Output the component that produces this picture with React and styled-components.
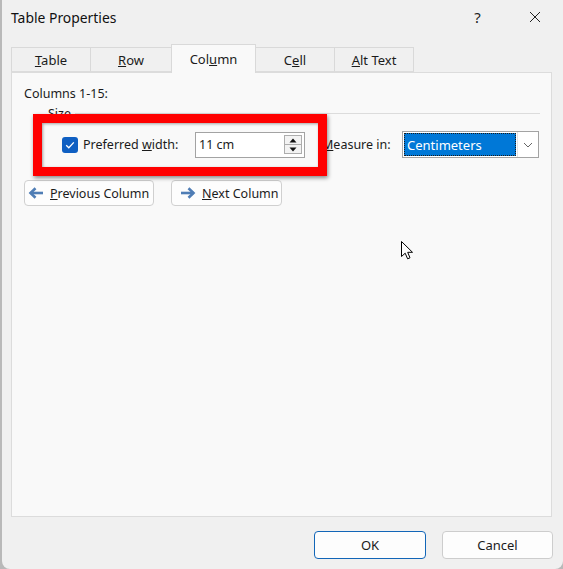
import React from 'react';
import styled, { createGlobalStyle } from 'styled-components';

const GlobalStyle = createGlobalStyle`
  html, body {
    margin: 0;
    padding: 0;
    background: #b9b9b9;
  }
  body {
    font-family: "Segoe UI", "Noto Sans", sans-serif;
    font-size: 12.5px;
    color: #1b1b1b;
  }
`;

const Window = styled.div`
  position: relative;
  margin-left: 2px;
  width: 561px;
  height: 569px;
  background: #f0f0f0;
  border-radius: 0 0 8px 8px;
  display: flex;
  flex-direction: column;
  box-sizing: border-box;
  overflow: hidden;
`;

const TitleBar = styled.div`
  height: 34px;
  display: flex;
  align-items: center;
  padding-left: 9px;
`;

const Title = styled.div`
  flex: 1;
  font-size: 13.9px;
  color: #111;
`;

const TitleButton = styled.div`
  width: 57px;
  height: 34px;
  display: flex;
  align-items: center;
  justify-content: center;
  font-size: 15px;
  color: #222;
`;

const TabRow = styled.div`
  display: flex;
  align-items: flex-end;
  height: 28px;
  margin-top: 10px;
  padding-left: 10px;
  position: relative;
  z-index: 1;
`;

const Tab = styled.div`
  flex-shrink: 0;
  width: ${p => p.$w}px;
  height: ${p => (p.$active ? 29 : 25)}px;
  margin-bottom: ${p => (p.$active ? -1 : 0)}px;
  margin-left: -1px;
  box-sizing: border-box;
  border: 1px solid #d9d9d9;
  border-bottom: ${p => (p.$active ? 'none' : '1px solid #dcdcdc')};
  background: ${p => (p.$active ? '#f9f9f9' : '#f0f0f0')};
  display: flex;
  align-items: ${p => (p.$active ? 'flex-start' : 'center')};
  padding-top: ${p => (p.$active ? 5 : 0)}px;
  justify-content: center;
  font-size: 13px;
  z-index: ${p => (p.$active ? 2 : 1)};
`;

const Panel = styled.div`
  margin: 0 11px 0 9px;
  height: 445px;
  box-sizing: border-box;
  border: 1px solid #dcdcdc;
  background: #f9f9f9;
  padding: 13px 11px 0 12px;
  display: flex;
  flex-direction: column;
`;

const Heading = styled.div`
  line-height: 16px;
`;

const GroupHeader = styled.div`
  display: flex;
  align-items: center;
  margin: 3px 0 0 24px;
  height: 16px;
`;

const GroupLine = styled.div`
  flex: 1;
  height: 0;
  border-top: 1px solid #dcdcdc;
  margin-left: 4px;
`;

const FieldRow = styled.div`
  display: flex;
  align-items: center;
  height: 27px;
  margin-top: 10px;
  padding-left: 38px;

  & > * {
    flex-shrink: 0;
  }
`;

const CheckLabel = styled.div`
  width: 117px;
  padding-left: 5px;
  box-sizing: border-box;
  white-space: nowrap;
`;

const SpinInput = styled.div`
  width: 110px;
  height: 26px;
  box-sizing: border-box;
  border: 1px solid #a3a3a3;
  background: #fff;
  display: flex;
  align-items: center;
  padding: 0 2px 0 3px;
`;

const InputText = styled.div`
  flex: 1;
`;

const SpinColumn = styled.div`
  display: flex;
  flex-direction: column;
  width: 18px;
`;

const SpinButton = styled.div`
  height: 10px;
  box-sizing: border-box;
  border: 1px solid #adadad;
  margin-top: ${p => (p.$down ? -1 : 0)}px;
  background: #f3f3f3;
  display: flex;
  align-items: center;
  justify-content: center;
`;

const MeasureLabel = styled.div`
  width: 80px;
  margin-left: 17px;
  white-space: nowrap;
`;

const Select = styled.div`
  width: 137px;
  height: 27px;
  box-sizing: border-box;
  border: 1px solid #a3a3a3;
  background: #fff;
  display: flex;
`;

const SelectValue = styled.div`
  flex: 1;
  margin: 1px;
  border: 1px dotted #1b1b1b;
  background: #0078d7;
  color: #fff;
  display: flex;
  align-items: center;
  padding-left: 2px;
  font-size: 13px;
`;

const DropButton = styled.div`
  width: 20px;
  display: flex;
  align-items: center;
  justify-content: center;
  border-left: 1px solid #e2e2e2;
`;

const ButtonRow = styled.div`
  display: flex;
  gap: 17px;
  margin-top: 22px;
`;

const NavButton = styled.div`
  flex-shrink: 0;
  width: ${p => p.$w}px;
  height: 26px;
  box-sizing: border-box;
  border: 1px solid #d0d0d0;
  border-radius: 4px;
  background: #fdfdfd;
  display: flex;
  align-items: center;
  gap: 6px;
  padding-left: ${p => p.$pad}px;
  white-space: nowrap;
`;

const Footer = styled.div`
  display: flex;
  justify-content: flex-end;
  gap: 16px;
  padding: 14px 10px 0 0;
`;

const DialogButton = styled.div`
  width: ${p => p.$w}px;
  height: 28px;
  box-sizing: border-box;
  border: 1px solid ${p => (p.$primary ? '#1266b8' : '#cdcdcd')};
  border-radius: 4px;
  background: #fdfdfd;
  display: flex;
  align-items: center;
  justify-content: center;
  font-size: 13px;
`;

const Highlight = styled.div`
  position: absolute;
  left: 31px;
  top: 114px;
  width: 294px;
  height: 62px;
  box-sizing: border-box;
  border: 9px solid #ff0000;
  box-shadow: 1px 2px 4px rgba(0, 0, 0, 0.45), inset 1px 1px 3px rgba(0, 0, 0, 0.35);
  pointer-events: none;
`;

const Pointer = styled.svg`
  position: absolute;
  left: 399px;
  top: 241px;
`;

const Check = () => (
  <svg width="16" height="16" viewBox="0 0 16 16">
    <rect x="0" y="0" width="16" height="16" rx="3" fill="#0f5fc2" />
    <path d="M4.2 8.3 L6.8 10.8 L11.8 5.4" fill="none" stroke="#fff" strokeWidth="1.3" />
  </svg>
);

const Arrow = ({ dir }) => (
  <svg width="16" height="12" viewBox="0 0 16 12">
    <g transform={dir === 'right' ? 'translate(16 0) scale(-1 1)' : undefined}>
      <path d="M2.5 6 H15" stroke="#4f7db5" strokeWidth="2.6" />
      <path d="M7.5 1.2 L2.5 6 L7.5 10.8" fill="none" stroke="#4f7db5" strokeWidth="2.6" />
    </g>
  </svg>
);

const Triangle = ({ down }) => (
  <svg width="8" height="5" viewBox="0 0 8 5">
    <path d={down ? 'M0.5 0.5 H7.5 L4 4.5 Z' : 'M0.5 4.5 H7.5 L4 0.5 Z'} fill="#111" />
  </svg>
);

export default function App() {
  return (
    <>
      <GlobalStyle />
      <Window>
        <TitleBar>
          <Title>Table Properties</Title>
          <TitleButton>?</TitleButton>
          <TitleButton>
            <svg width="12" height="12" viewBox="0 0 12 12">
              <path d="M1 1 L11 11 M11 1 L1 11" stroke="#222" strokeWidth="1" />
            </svg>
          </TitleButton>
        </TitleBar>

        <TabRow>
          <Tab $w={80}><span><u>T</u>able</span></Tab>
          <Tab $w={82}><span><u>R</u>ow</span></Tab>
          <Tab $w={85} $active><span>Col<u>u</u>mn</span></Tab>
          <Tab $w={80}><span>C<u>e</u>ll</span></Tab>
          <Tab $w={80}><span><u>A</u>lt Text</span></Tab>
        </TabRow>

        <Panel>
          <Heading>Columns 1-15:</Heading>
          <GroupHeader>
            <span>Size</span>
            <GroupLine />
          </GroupHeader>
          <FieldRow>
            <Check />
            <CheckLabel>Preferred <u>w</u>idth:</CheckLabel>
            <SpinInput>
              <InputText>11 cm</InputText>
              <SpinColumn>
                <SpinButton><Triangle /></SpinButton>
                <SpinButton $down><Triangle down /></SpinButton>
              </SpinColumn>
            </SpinInput>
            <MeasureLabel><u>M</u>easure in:</MeasureLabel>
            <Select>
              <SelectValue>Centimeters</SelectValue>
              <DropButton>
                <svg width="10" height="6" viewBox="0 0 10 6">
                  <path d="M1 1 L5 5 L9 1" fill="none" stroke="#666" strokeWidth="1" />
                </svg>
              </DropButton>
            </Select>
          </FieldRow>
          <ButtonRow>
            <NavButton $w={130} $pad={3}>
              <Arrow dir="left" />
              <span><u>P</u>revious Column</span>
            </NavButton>
            <NavButton $w={111} $pad={8}>
              <Arrow dir="right" />
              <span><u>N</u>ext Column</span>
            </NavButton>
          </ButtonRow>
        </Panel>

        <Footer>
          <DialogButton $w={112} $primary>OK</DialogButton>
          <DialogButton $w={111}>Cancel</DialogButton>
        </Footer>

        <Highlight />
        <Pointer width="14" height="20" viewBox="0 0 14 20">
          <path d="M0.5 0.5 L0.5 15.5 L4.2 12.2 L6.6 17.8 L9 16.8 L6.7 11.3 L11.5 11.3 Z" fill="#fff" stroke="#000" strokeWidth="1" strokeLinejoin="round" />
        </Pointer>
      </Window>
    </>
  );
}
